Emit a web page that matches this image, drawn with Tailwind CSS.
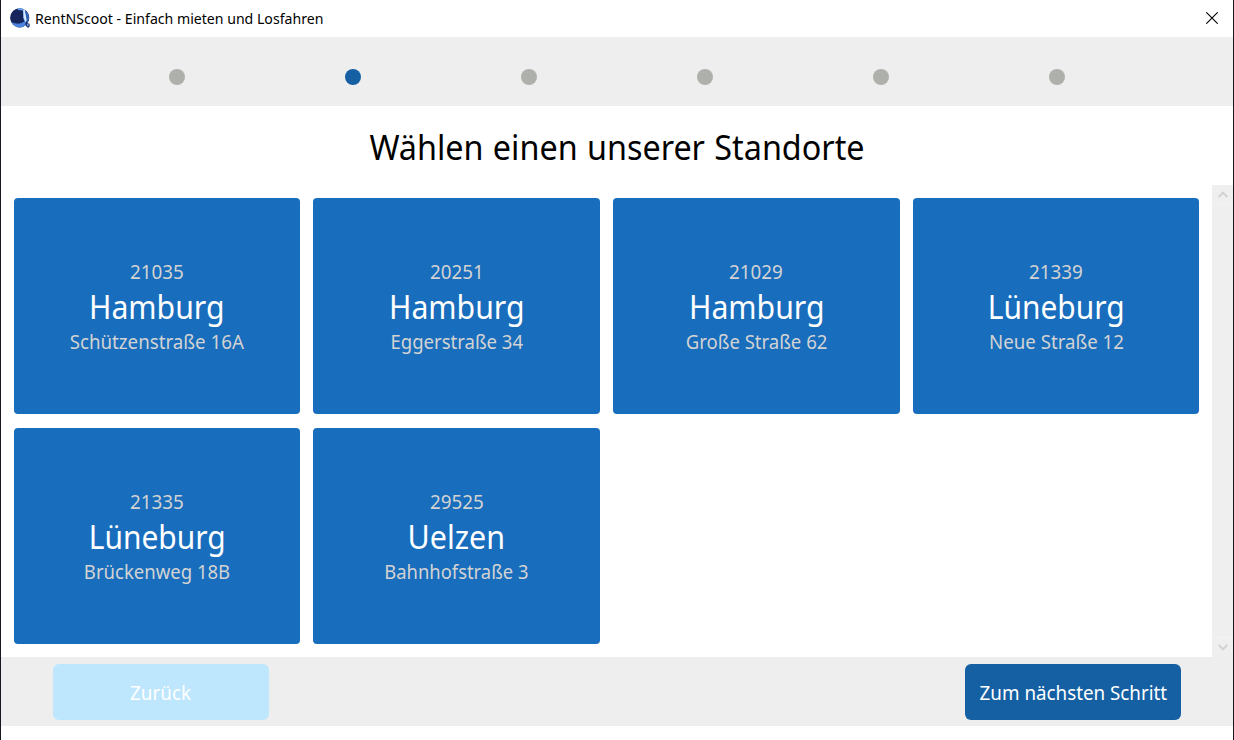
<!DOCTYPE html>
<html lang="de">
<head>
<meta charset="utf-8">
<title>RentNScoot - Einfach mieten und Losfahren</title>
<script src="https://cdn.jsdelivr.net/npm/@tailwindcss/browser@4"></script>
</head>
<body class="h-[740px] w-[1234px] overflow-hidden bg-white font-['Noto_Sans',sans-serif] text-black">
<div class="flex h-full flex-col border-x border-[#17181f]">
  <header class="flex h-[37px] shrink-0 items-center justify-between pl-[9px] pr-[15px]">
    <div class="flex items-center gap-[5px]">
      <svg class="h-5 w-5 -mt-0.5" viewBox="0 0 20 20">
        <circle cx="9.7" cy="9.8" r="9.6" fill="#16265c"/>
        <path d="M1.2 14Q9 17.5 14.5 13.5l2 3Q13 19.4 9.3 19.4 4 19 1.2 14Z" fill="#4b83df"/>
        <path d="M7.5 .5Q11 -.2 14.5 1.5L16 6l1 7-2 2-1.7-5L13.2 2.6 8 2Z" fill="#65a2f4"/>
        <path d="M13.2 1.8h1.8L15.3 6l1.3 5-.8 3-2.1-4Z" fill="#d5ebff"/>
        <path d="M15 2.2Q19.4 5.5 19 11l-1.8 3.5-.8-6Z" fill="#3465bd"/>
        <path d="M15 15.5l2-.5 2.7.8v2.7L18 20l-2.3-2.3Z" fill="#233b7c"/>
        <path d="M17 16.2h1.5v1.5H17z" fill="#8eb5ed"/>
      </svg>
      <span class="-mt-0.5 origin-left scale-x-[.973] whitespace-nowrap text-[14.5px] leading-5">RentNScoot - Einfach mieten und Losfahren</span>
    </div>
    <svg class="-mt-0.5 h-3 w-3" viewBox="0 0 12 12" fill="none" stroke="#000" stroke-width="1.1"><path d="M.3.3l11.4 11.4M11.7.3L.3 11.7"/></svg>
  </header>
  <nav class="flex h-[69px] shrink-0 items-center gap-40 bg-[#eeeeee] pl-[168px] pt-[11px]">
    <i class="h-4 w-4 rounded-full bg-[#adb0ab]"></i>
    <i class="h-4 w-4 rounded-full bg-[#155fa3]"></i>
    <i class="h-4 w-4 rounded-full bg-[#adb0ab]"></i>
    <i class="h-4 w-4 rounded-full bg-[#adb0ab]"></i>
    <i class="h-4 w-4 rounded-full bg-[#adb0ab]"></i>
    <i class="h-4 w-4 rounded-full bg-[#adb0ab]"></i>
  </nav>
  <h1 class="flex h-[79px] shrink-0 scale-x-[.924] items-center justify-center pt-[3px] text-[35px] leading-[48px] [word-spacing:1px]">Wählen einen unserer Standorte</h1>
  <main class="flex h-[472px] shrink-0">
    <div class="grid flex-1 grid-cols-[repeat(4,286.6px)] grid-rows-[repeat(2,216.6px)] gap-x-[13.1px] gap-y-[13.4px] pl-[12.7px] pt-[12.6px] text-center text-[19.5px] leading-[27px] text-[#d3d3d3]">
      <section class="flex flex-col items-center rounded-[4px] bg-[#186dbd] pt-[60px]"><p class="scale-x-[.965]">21035</p><h2 class="scale-x-[.944] text-[32px] leading-[43px] text-white">Hamburg</h2><p class="scale-x-[.96]">Schützenstraße 16A</p></section>
      <section class="flex flex-col items-center rounded-[4px] bg-[#186dbd] pt-[60px]"><p class="scale-x-[.965]">20251</p><h2 class="scale-x-[.944] text-[32px] leading-[43px] text-white">Hamburg</h2><p class="scale-x-[.95]">Eggerstraße 34</p></section>
      <section class="flex flex-col items-center rounded-[4px] bg-[#186dbd] pt-[60px]"><p class="scale-x-[.965]">21029</p><h2 class="scale-x-[.944] text-[32px] leading-[43px] text-white">Hamburg</h2><p class="scale-x-[.95]">Große Straße 62</p></section>
      <section class="flex flex-col items-center rounded-[4px] bg-[#186dbd] pt-[60px]"><p class="scale-x-[.965]">21339</p><h2 class="scale-x-[.935] text-[32px] leading-[43px] text-white">Lüneburg</h2><p class="scale-x-[.957]">Neue Straße 12</p></section>
      <section class="flex flex-col items-center rounded-[4px] bg-[#186dbd] pt-[60px]"><p class="scale-x-[.965]">21335</p><h2 class="scale-x-[.935] text-[32px] leading-[43px] text-white">Lüneburg</h2><p class="scale-x-[.95]">Brückenweg 18B</p></section>
      <section class="flex flex-col items-center rounded-[4px] bg-[#186dbd] pt-[60px]"><p class="scale-x-[.965]">29525</p><h2 class="scale-x-[.95] text-[32px] leading-[43px] text-white">Uelzen</h2><p class="scale-x-[.943]">Bahnhofstraße 3</p></section>
    </div>
    <div class="flex w-[21px] shrink-0 flex-col justify-between bg-[#efefef]">
      <div class="flex h-5 items-center justify-center border-b border-[#f3f3f3]"><svg class="h-[7px] w-[10px]" viewBox="0 0 10 7" fill="none" stroke="#d3d3d3" stroke-width="2"><path d="M.7 6L5 1.7 9.3 6"/></svg></div>
      <div class="flex h-5 items-center justify-center border-t border-[#f3f3f3]"><svg class="h-[7px] w-[10px]" viewBox="0 0 10 7" fill="none" stroke="#d3d3d3" stroke-width="2"><path d="M.7 1L5 5.3 9.3 1"/></svg></div>
    </div>
  </main>
  <footer class="flex h-[69px] shrink-0 items-center justify-between bg-[#eeeeee] px-[52px] text-[19.5px] leading-[27px] text-white">
    <button class="h-14 w-[216px] rounded-md bg-[#bee6fd] pt-0.5"><span class="inline-block scale-x-[.965]">Zurück</span></button>
    <button class="h-14 w-[216px] whitespace-nowrap rounded-md bg-[#155fa3] pt-0.5"><span class="inline-block scale-x-[.963]">Zum nächsten Schritt</span></button>
  </footer>
</div>
</body>
</html>
